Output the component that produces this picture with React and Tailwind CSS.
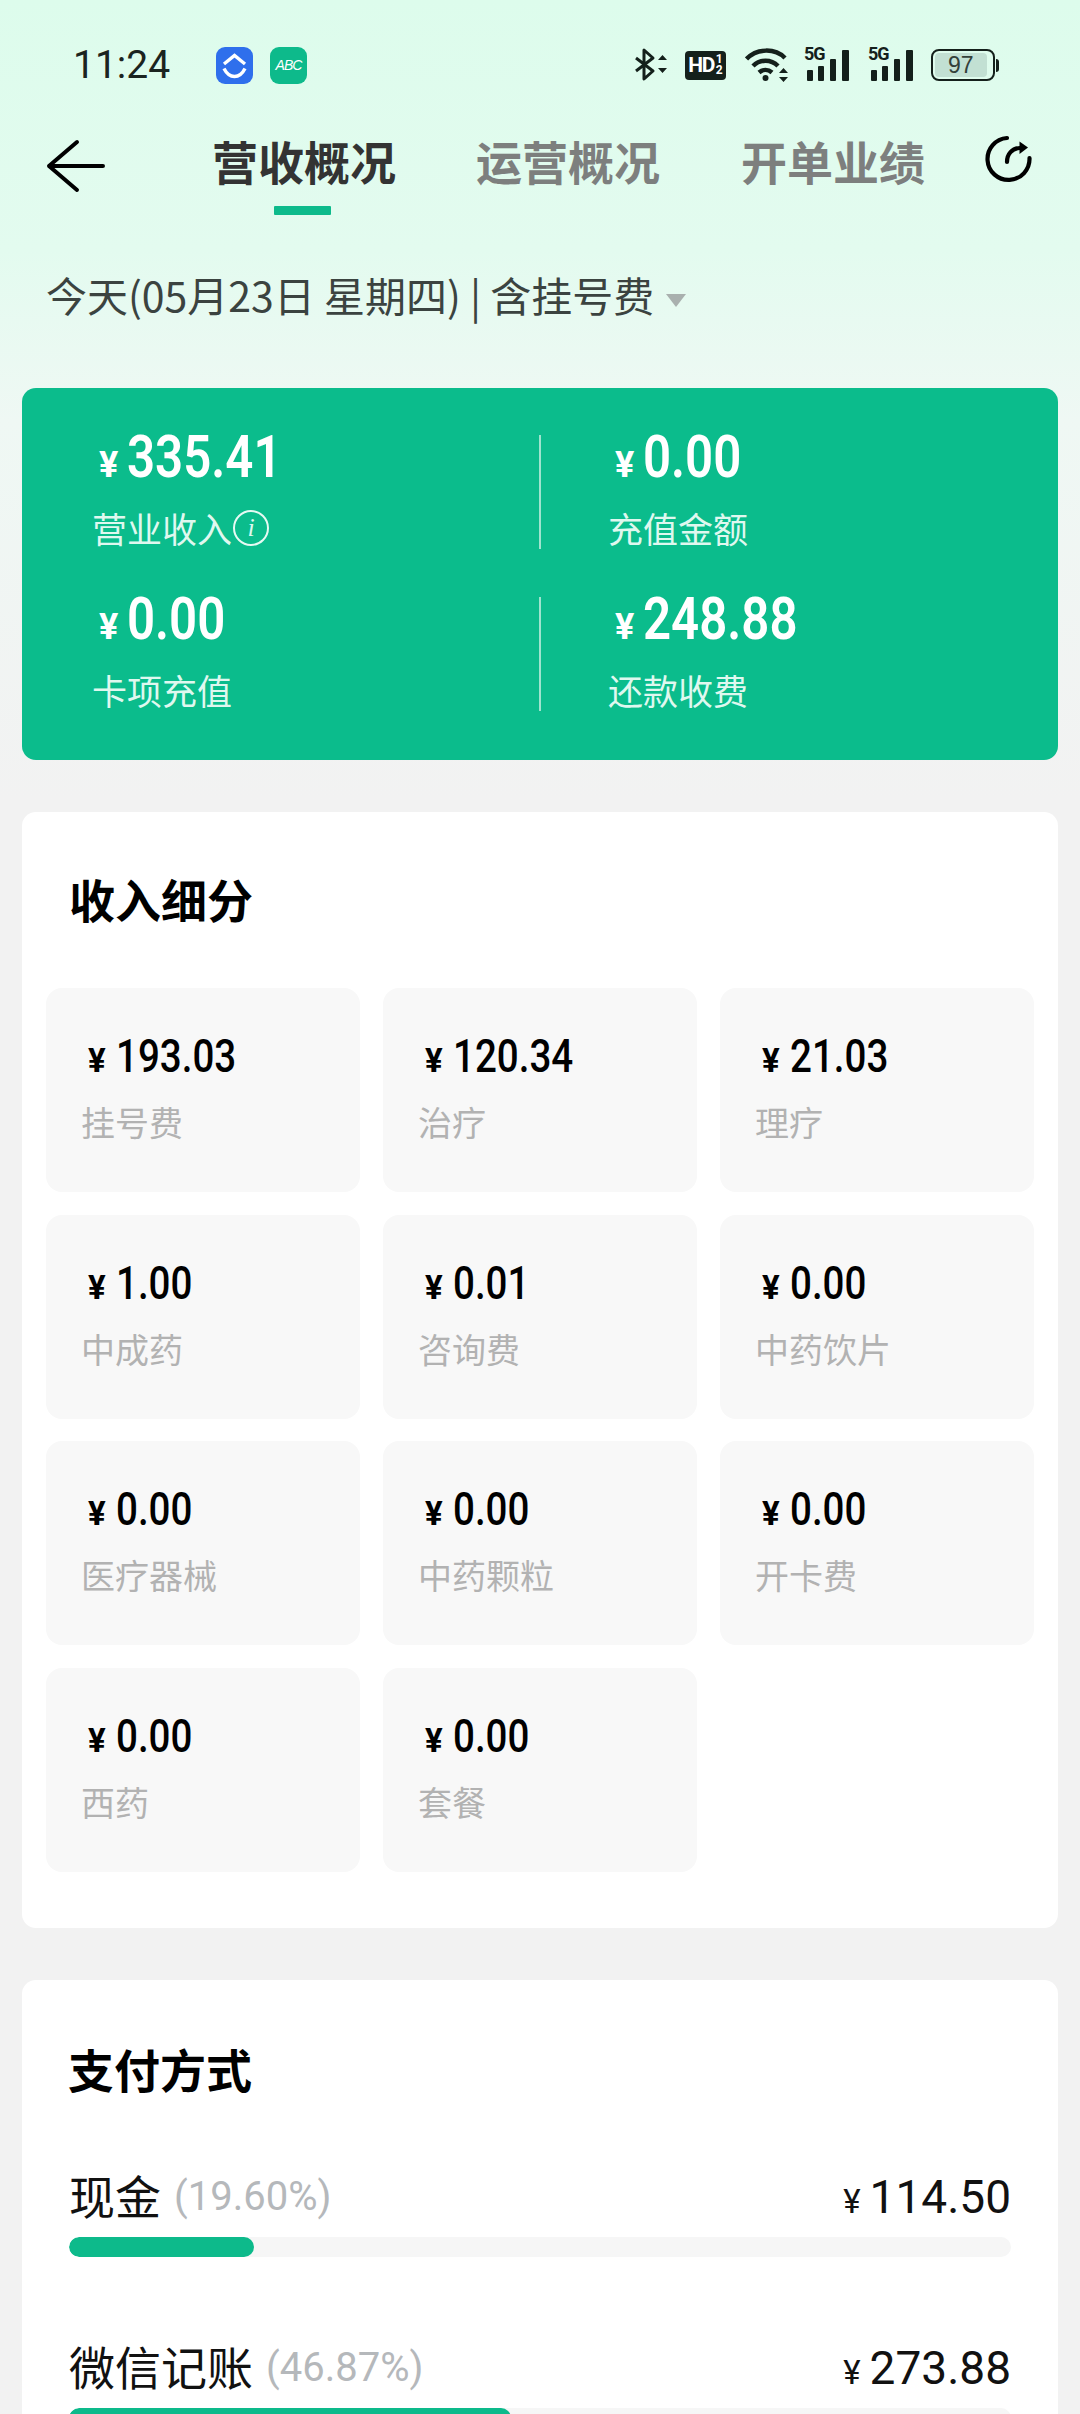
const NUM = "font-['Roboto',sans-serif]";
const CJK = "font-['Noto_Sans_CJK_SC','Noto_Sans',sans-serif]";

const summary = [
  [{ value: '335.41', label: '营业收入', info: true }, { value: '0.00', label: '充值金额' }],
  [{ value: '0.00', label: '卡项充值' }, { value: '248.88', label: '还款收费' }],
];

const tiles = [
  ['193.03', '挂号费'], ['120.34', '治疗'], ['21.03', '理疗'],
  ['1.00', '中成药'], ['0.01', '咨询费'], ['0.00', '中药饮片'],
  ['0.00', '医疗器械'], ['0.00', '中药颗粒'], ['0.00', '开卡费'],
  ['0.00', '西药'], ['0.00', '套餐'],
];

const payments = [
  { name: '现金', pct: '19.60', amount: '114.50' },
  { name: '微信记账', pct: '46.87', amount: '273.88' },
];

function Signal() {
  return (
    <div className="relative w-[47px] h-[32px]">
      <span className="absolute left-0 top-[-5px] text-[18px] leading-[20px] font-bold tracking-[-1px] text-[#14201b] font-['Roboto',sans-serif]">5G</span>
      <svg viewBox="0 0 47 32" className="w-[47px] h-[32px]">
        <rect x="3" y="21" width="6" height="11" rx="1" fill="#14201b" />
        <rect x="14" y="17" width="6" height="15" rx="1" fill="#14201b" />
        <rect x="26" y="10" width="6" height="22" rx="1" fill="#14201b" />
        <rect x="38" y="1" width="7" height="31" rx="1" fill="#14201b" />
      </svg>
    </div>
  );
}

function StatusBar() {
  return (
    <div className="h-[130px] flex items-center">
      <span className="ml-[73px] w-[143px] text-[39px] leading-none text-[#1b2420] font-['Roboto',sans-serif]">11:24</span>
      <div className="w-[37px] h-[37px] rounded-[9px] bg-[#2f6fec] flex items-center justify-center">
        <svg viewBox="0 0 37 37" className="w-[37px] h-[37px]" fill="none" stroke="#fff" strokeWidth="3.4">
          <path d="M8 17 L18.5 8.5 L29 17" />
          <path d="M8 21.5 C11 27.5 15 29.5 18.5 29.5 C22 29.5 26 27.5 29 21.5" />
        </svg>
      </div>
      <div className="ml-[17px] w-[37px] h-[37px] rounded-[9px] bg-[#0dba8b] flex items-center justify-center text-white text-[14px] italic tracking-[-1px] font-['Liberation_Sans',sans-serif]">ABC</div>

      <svg viewBox="0 0 34 34" className="ml-[327px] w-[34px] h-[34px]" fill="none" stroke="#14201b" strokeWidth="3">
        <path d="M2 10 L19 23 L10 31 V2 L19 10 L2 23" strokeLinejoin="round" />
        <path d="M24 12 L28.5 7 L33 12 Z M24 20 L33 20 L28.5 25 Z" fill="#14201b" stroke="none" />
      </svg>
      <div className="ml-[17px] w-[41px] h-[29px] rounded-[4px] bg-[#14201b] flex items-center justify-center text-white text-[21px] leading-none font-bold tracking-[-1.5px] font-['Roboto',sans-serif]">
        HD<span className="flex flex-col text-[12px] leading-[11px] ml-[2px] tracking-normal"><span>1</span><span>2</span></span>
      </div>
      <svg viewBox="0 0 44 36" className="ml-[19px] w-[44px] h-[36px]" fill="none" stroke="#14201b" strokeWidth="4.5">
        <path d="M1.5 12 C12 1 30 1 40 11" />
        <path d="M8 19 C15 12 26 12 33 19" />
        <path d="M14 25.5 C18 22 23 22 27 25.5" />
        <circle cx="20.5" cy="31" r="3" fill="#14201b" stroke="none" />
        <path d="M34 26 L38.5 21 L43 26 Z M34 30 L43 30 L38.5 35 Z" fill="#14201b" stroke="none" />
      </svg>
      <div className="ml-[15px]"><Signal /></div>
      <div className="ml-[17px]"><Signal /></div>
      <div className="ml-[16px] flex items-center">
        <div className="w-[64px] h-[32px] rounded-[8px] border-[2px] border-[#14201b] p-[2px]">
          <div className="h-full w-[92%] rounded-[4px] bg-[#c2e0d3] flex items-center justify-center text-[23px] leading-none text-[#33413a] font-['Liberation_Sans',sans-serif]">97</div>
        </div>
        <div className="ml-[1px] w-[3px] h-[13px] rounded-r bg-[#14201b]" />
      </div>
    </div>
  );
}

function NavBar() {
  return (
    <div className={`h-[64px] flex items-center ${CJK}`}>
      <svg viewBox="0 0 60 54" className="ml-[46px] mt-[8px] w-[60px] h-[54px] shrink-0" fill="none" stroke="#000" strokeWidth="4" strokeLinecap="round" strokeLinejoin="round">
        <path d="M3 27 H57 M31 3 L3 27 L31 51" />
      </svg>
      <div className="relative ml-[106px] -mt-[4px] w-[184px] text-[46px] leading-none font-bold text-[#333] whitespace-nowrap">
        营收概况
        <div className="absolute left-[62px] top-[69px] w-[57px] h-[9px] rounded-[1px] bg-[#0dba8b]" />
      </div>
      <div className="ml-[80px] -mt-[4px] w-[184px] text-[46px] leading-none font-bold text-[#7d7f7e] whitespace-nowrap">运营概况</div>
      <div className="ml-[81px] -mt-[4px] w-[184px] text-[46px] leading-none font-bold text-[#7d7f7e] whitespace-nowrap">开单业绩</div>
      <svg viewBox="0 0 48 48" className="ml-[60px] w-[48px] h-[48px] -mt-[6px]" fill="none" stroke="#000" strokeWidth="4.2" strokeLinecap="round">
        <path d="M22 3 A21 21 0 1 0 44.5 23" />
        <path d="M22 27 C22 19 27 13.5 35 13" />
        <path d="M34.5 6.5 L43 12.5 L34.5 19 Z" fill="#000" stroke="none" />
      </svg>
    </div>
  );
}

// digits are drawn condensed, the reference uses a DIN-like face
function Amount({ value, yen, digits, squeeze, tone, weight }) {
  return (
    <div className={`flex items-baseline leading-none whitespace-nowrap ${NUM} ${tone}`}>
      <span className={`${yen} font-bold shrink-0`}>¥</span>
      <span className={`inline-block origin-left ${squeeze} ${digits} ${weight}`}>{value}</span>
    </div>
  );
}

function Summary() {
  return (
    <div className={`mx-[22px] h-[372px] rounded-[14px] bg-[#0bbc8c] pt-[47px] flex flex-col gap-[48px] ${CJK}`}>
      {summary.map((row, i) => (
        <div key={i} className="flex h-[114px]">
          {row.map((cell, j) => (
            <div key={cell.label} className={`w-[517px] text-white ${j === 1 ? 'border-l-[2px] border-[#9fe4cf] pl-[67px]' : 'pl-[70px]'}`}>
              <div className="pl-[7px] h-[60px] -mt-[8px]">
                <Amount value={cell.value} yen="text-[36px] w-[28px]" digits="text-[60px]" squeeze="scale-x-[0.82]" tone="text-white" weight="font-semibold" />
              </div>
              <div className="flex items-center mt-[21px] text-[35px] leading-[40px] text-[#dff8ef]">
                {cell.label}
                {cell.info && (
                  <span className="ml-[1px] w-[36px] h-[36px] rounded-full border-[2.5px] border-[#e6faf3] flex items-center justify-center text-[26px] italic font-['Liberation_Serif',serif]">i</span>
                )}
              </div>
            </div>
          ))}
        </div>
      ))}
    </div>
  );
}

function Breakdown() {
  return (
    <div className={`mx-[22px] mt-[52px] h-[1116px] rounded-[14px] bg-white px-[24px] ${CJK}`}>
      <div className="pt-[59px] pl-[23px] h-[176px] text-[46px] leading-[54px] font-bold text-black">收入细分</div>
      <div className="grid grid-cols-3 gap-x-[23px] gap-y-[22.6px]">
        {tiles.map(([value, label]) => (
          <div key={label} className="h-[204px] rounded-[16px] bg-[#f8f8f8] pt-[44px] pl-[35px]">
            <div className="pl-[7px] h-[50px]">
              <Amount value={value} yen="text-[33px] w-[28px]" digits="text-[47px]" squeeze="scale-x-[0.82]" tone="text-black" weight="font-medium" />
            </div>
            <div className="mt-[20px] text-[34px] leading-[40px] text-[#b2b2b2]">{label}</div>
          </div>
        ))}
      </div>
    </div>
  );
}

function Payments() {
  return (
    <div className={`mx-[22px] mt-[52px] rounded-t-[14px] bg-white px-[47px] ${CJK}`}>
      <div className="pt-[61px] -ml-[1px] h-[167px] text-[46px] leading-[54px] font-bold text-black">支付方式</div>
      {payments.map((p) => (
        <div key={p.name} className="h-[171px] pt-[22px]">
          <div className="flex items-center justify-between h-[56px]">
            <div className="flex items-center text-[46px] leading-[56px] text-[#111]">
              <span className="pb-[6px]">{p.name}</span>
              <span className="ml-[13px] text-[40px] text-[#b5b8bb] font-['Roboto',sans-serif]">({p.pct}%)</span>
            </div>
            <div className="flex items-baseline leading-none text-[#111] font-['Roboto',sans-serif]">
              <span className="text-[33px] mr-[9px]">¥</span>
              <span className="text-[46px]">{p.amount}</span>
            </div>
          </div>
          <div className="mt-[12px] h-[20px] rounded-full bg-[#f6f6f6] overflow-hidden">
            <div className="h-full rounded-full bg-[#0dba8b]" style={{ width: `${p.pct}%` }} />
          </div>
        </div>
      ))}
    </div>
  );
}

export default function App() {
  return (
    <div className="w-[1080px] h-[2414px] overflow-hidden bg-[linear-gradient(to_bottom,#ddfcec_0px,#e3fbef_250px,#eff8f4_420px,#f2f2f2_800px)]">
      <StatusBar />
      <NavBar />
      <div className={`h-[194px] pl-[46px] pt-[75px] text-[41px] leading-[50px] text-[#3b4340] whitespace-nowrap ${CJK}`}>
        今天(05月23日 星期四) | 含挂号费
        <span className="inline-block ml-[12px] align-middle w-0 h-0 border-x-[10px] border-x-transparent border-t-[13px] border-t-[#a9b0ae]" />
      </div>
      <Summary />
      <Breakdown />
      <Payments />
    </div>
  );
}
